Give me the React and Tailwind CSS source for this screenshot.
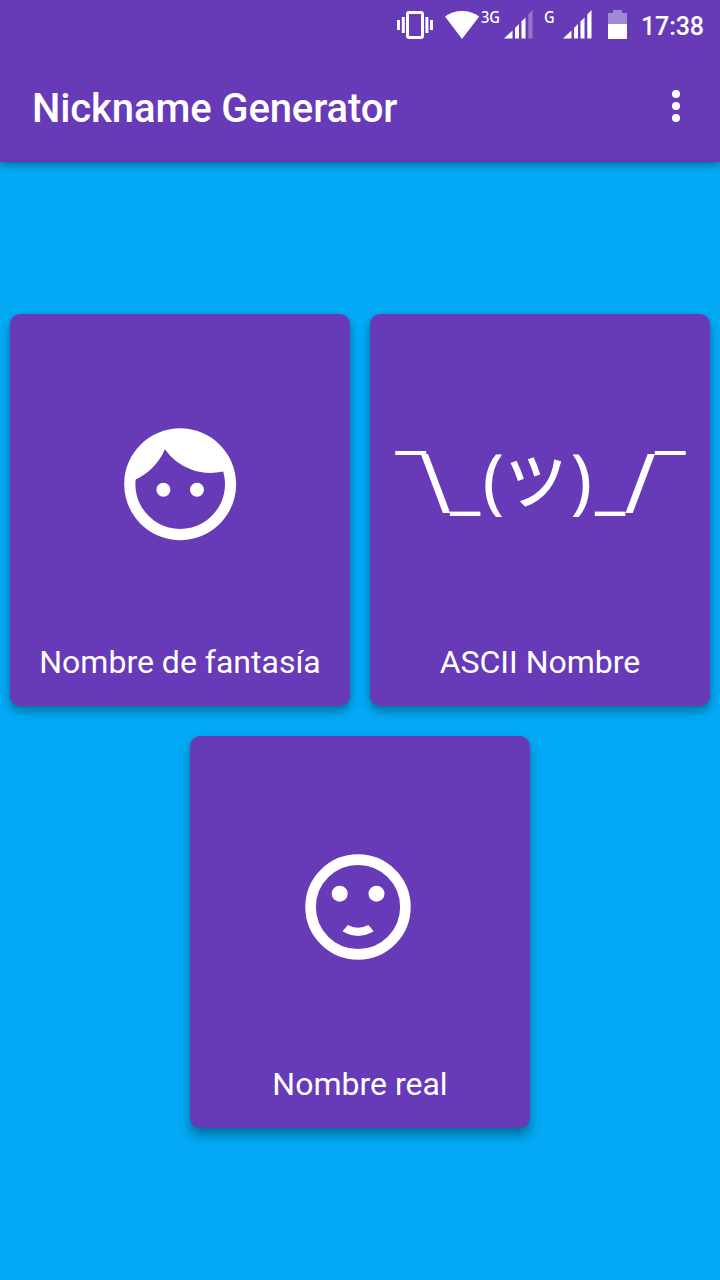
import { MdFace } from "react-icons/md";

function SignalIcon({ weak }) {
  return (
    <svg width="30" height="30" viewBox="0 0 30 30" fill="#fff">
      <path d="M0 28.5 8.5 20.5v8z" />
      <path d="M11 18 15 14v14.5h-4z" />
      <path d="M17.5 11.5 21.5 7.5v21h-4z" />
      <path d="M24.3 4.5 28.5 0v28.5h-4.2z" opacity={weak ? 0.3 : 1} />
    </svg>
  );
}

function StatusBar() {
  return (
    <div className="flex h-[50px] items-start pl-[397px]">
      {/* Vibrate */}
      <svg className="mt-[11px] shrink-0" width="36" height="28" viewBox="0 0 36 28" fill="#fff">
        <rect x="10.5" y="1.5" width="15" height="25" rx="1.5" fill="none" stroke="#fff" strokeWidth="3" />
        <rect x="0" y="9" width="3" height="10" />
        <rect x="4.8" y="6" width="3" height="16" />
        <rect x="28.4" y="6" width="3" height="16" />
        <rect x="33" y="9" width="3" height="10" />
      </svg>
      {/* Wifi */}
      <svg className="mt-[11px] ml-3 shrink-0" width="35" height="28" viewBox="0 0 35 28" fill="#fff">
        <path d="M17 28 0 5.6C4.500 2 10.500 0 17 0s12.700 2 17.200 5.600z" />
      </svg>
      <span className="mt-[7px] ml-[1px] w-[19px] origin-left scale-x-[0.86] font-['Noto_Sans'] text-[17px] leading-5 font-medium">3G</span>
      <div className="mt-[10px] ml-1 w-[30px]">
        <SignalIcon weak />
      </div>
      <span className="mt-[7px] ml-[10px] w-[11px] origin-left scale-x-[0.86] font-['Noto_Sans'] text-[17px] leading-5 font-medium">G</span>
      <div className="mt-[10px] ml-2 w-[30px]">
        <SignalIcon />
      </div>
      {/* Battery */}
      <svg className="mt-[10px] ml-[15px] shrink-0" width="19" height="29" viewBox="0 0 19 29" fill="#fff">
        <path d="M0 3h5V0h9v3h5v11H0z" opacity="0.4" />
        <path d="M0 14h19v15H0z" />
      </svg>
      <span className="mt-[11px] ml-[14px] text-[25px] font-medium leading-8 tracking-[-0.1px]">17:38</span>
    </div>
  );
}

function Shrug() {
  return (
    <svg className="overflow-visible" width="300" height="140" viewBox="390 414 300 140" fill="#fff" fontFamily="'Noto Sans', 'Noto Sans CJK JP', sans-serif">
      <text>
        <tspan x="395.400" y="500.500" fontSize="61">¯</tspan>
        <tspan x="420" y="513" fontSize="83">\</tspan>
        <tspan x="450" y="505.500" fontSize="68">_</tspan>
        <tspan x="482.500" y="505.600" fontSize="72">(</tspan>
        <tspan x="505.500" y="504" fontSize="61" stroke="#fff" strokeWidth="1.2">ツ</tspan>
        <tspan x="570.500" y="505.600" fontSize="72">)</tspan>
        <tspan x="595" y="505.500" fontSize="68">_</tspan>
        <tspan x="624.800" y="513" fontSize="83">/</tspan>
        <tspan x="655" y="500.500" fontSize="61">¯</tspan>
      </text>
    </svg>
  );
}

function Smile() {
  return (
    <svg className="mt-[2px] mr-[3.500px]" width="106" height="106" viewBox="0 0 106 106" fill="#fff">
      <circle cx="53" cy="53" r="47.400" fill="none" stroke="#fff" strokeWidth="10.600" />
      <circle cx="34.700" cy="39.700" r="8" />
      <circle cx="71.500" cy="39.700" r="8" />
      <path d="M37.500 77.300 42.900 70.900Q53 76.500 63.300 70.900L68.700 77.300Q53 86.500 37.500 77.300z" />
    </svg>
  );
}

const cards = [
  { label: "Nombre de fantasía", icon: <MdFace size={134.4} />, shadow: "shadow-[0_5px_10px_rgba(0,0,0,0.35)]" },
  { label: "ASCII Nombre", icon: <Shrug />, shadow: "shadow-[0_5px_10px_rgba(0,0,0,0.35)]" },
  { label: "Nombre real", icon: <Smile />, shadow: "shadow-[0_7px_11px_rgba(0,0,0,0.35)]" },
];

export default function App() {
  return (
    <div className="flex h-[1280px] w-[720px] flex-col overflow-hidden bg-[#03a9f4] font-[Roboto,sans-serif] text-white">
      <header className="h-[162px] shrink-0 bg-[#673ab7] shadow-[0_2px_8px_rgba(0,0,0,0.45)]">
        <StatusBar />
        <div className="flex h-28 items-center justify-between pr-10 pl-8">
          <h1 className="mt-1.5 text-[40px] font-medium leading-none tracking-[-0.12px] whitespace-nowrap">Nickname Generator</h1>
          <svg width="8" height="32" viewBox="0 0 8 32" fill="#fff">
            <circle cx="4" cy="4" r="4" />
            <circle cx="4" cy="16" r="4" />
            <circle cx="4" cy="28" r="4" />
          </svg>
        </div>
      </header>

      <main className="mt-[152px] flex flex-wrap justify-center gap-x-5 gap-y-[30px]">
        {cards.map(({ label, icon, shadow }) => (
          <div
            key={label}
            className={`flex h-[392px] w-[340px] flex-col items-center rounded-[10px] bg-[#673ab7] ${shadow}`}
          >
            <div className="flex h-[340px] items-center">{icon}</div>
            <p className="-mt-3 text-[32px] leading-10 whitespace-nowrap">{label}</p>
          </div>
        ))}
      </main>
    </div>
  );
}
